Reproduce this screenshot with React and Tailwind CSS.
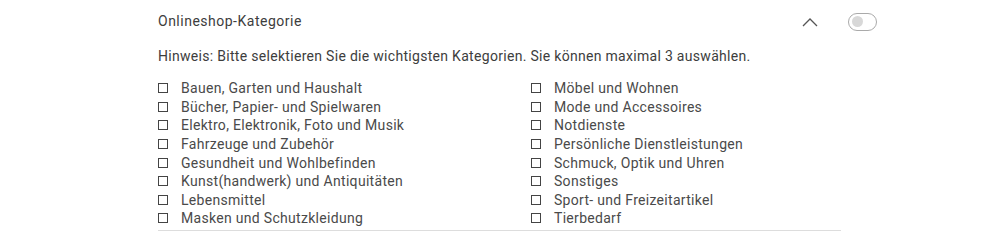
import React from "react";

const left = [
  "Bauen, Garten und Haushalt",
  "Bücher, Papier- und Spielwaren",
  "Elektro, Elektronik, Foto und Musik",
  "Fahrzeuge und Zubehör",
  "Gesundheit und Wohlbefinden",
  "Kunst(handwerk) und Antiquitäten",
  "Lebensmittel",
  "Masken und Schutzkleidung",
];
const right = [
  "Möbel und Wohnen",
  "Mode und Accessoires",
  "Notdienste",
  "Persönliche Dienstleistungen",
  "Schmuck, Optik und Uhren",
  "Sonstiges",
  "Sport- und Freizeitartikel",
  "Tierbedarf",
];

function Item({ label }) {
  return (
    <label className="flex items-center h-[18.6px]">
      <span className="w-[10px] h-[10px] border border-[#444] bg-white shrink-0" />
      <span className="ml-[13px] text-[14px] tracking-[0.3px] text-[#4a4a4a] leading-none">{label}</span>
    </label>
  );
}

export default function App() {
  return (
    <div
      className="w-[1004px] h-[241px] bg-white overflow-hidden"
      style={{ fontFamily: "Roboto, 'Liberation Sans', sans-serif" }}
    >
      <div className="ml-[158px] w-[683px]">
        <div className="flex items-center h-[43px] pt-[0px]">
          <span className="text-[14px] tracking-[0.5px] text-[#3d3d3d]">Onlineshop-Kategorie</span>
          <div className="ml-auto flex items-center">
            <svg width="16" height="10" viewBox="0 0 16 10" className="mr-[30px]">
              <path d="M1 9 L8 2 L15 9" fill="none" stroke="#555" strokeWidth="1.3" />
            </svg>
            <div className="w-[29px] h-[18px] rounded-full border border-[#aaa] flex items-center pl-[3px] mr-[-36px]">
              <span className="w-[11px] h-[11px] rounded-full bg-[#d8d8d8]" />
            </div>
          </div>
        </div>
        <div className="text-[14px] tracking-[0.3px] text-[#3d3d3d] h-[26px] flex items-center">
          Hinweis: Bitte selektieren Sie die wichtigsten Kategorien. Sie können maximal 3 auswählen.
        </div>
        <div className="flex pt-[10px] pb-[2px] border-b border-[#ddd]">
          <div className="w-[373px] flex flex-col">
            {left.map((l) => (
              <Item key={l} label={l} />
            ))}
          </div>
          <div className="flex flex-col">
            {right.map((l) => (
              <Item key={l} label={l} />
            ))}
          </div>
        </div>
      </div>
    </div>
  );
}
